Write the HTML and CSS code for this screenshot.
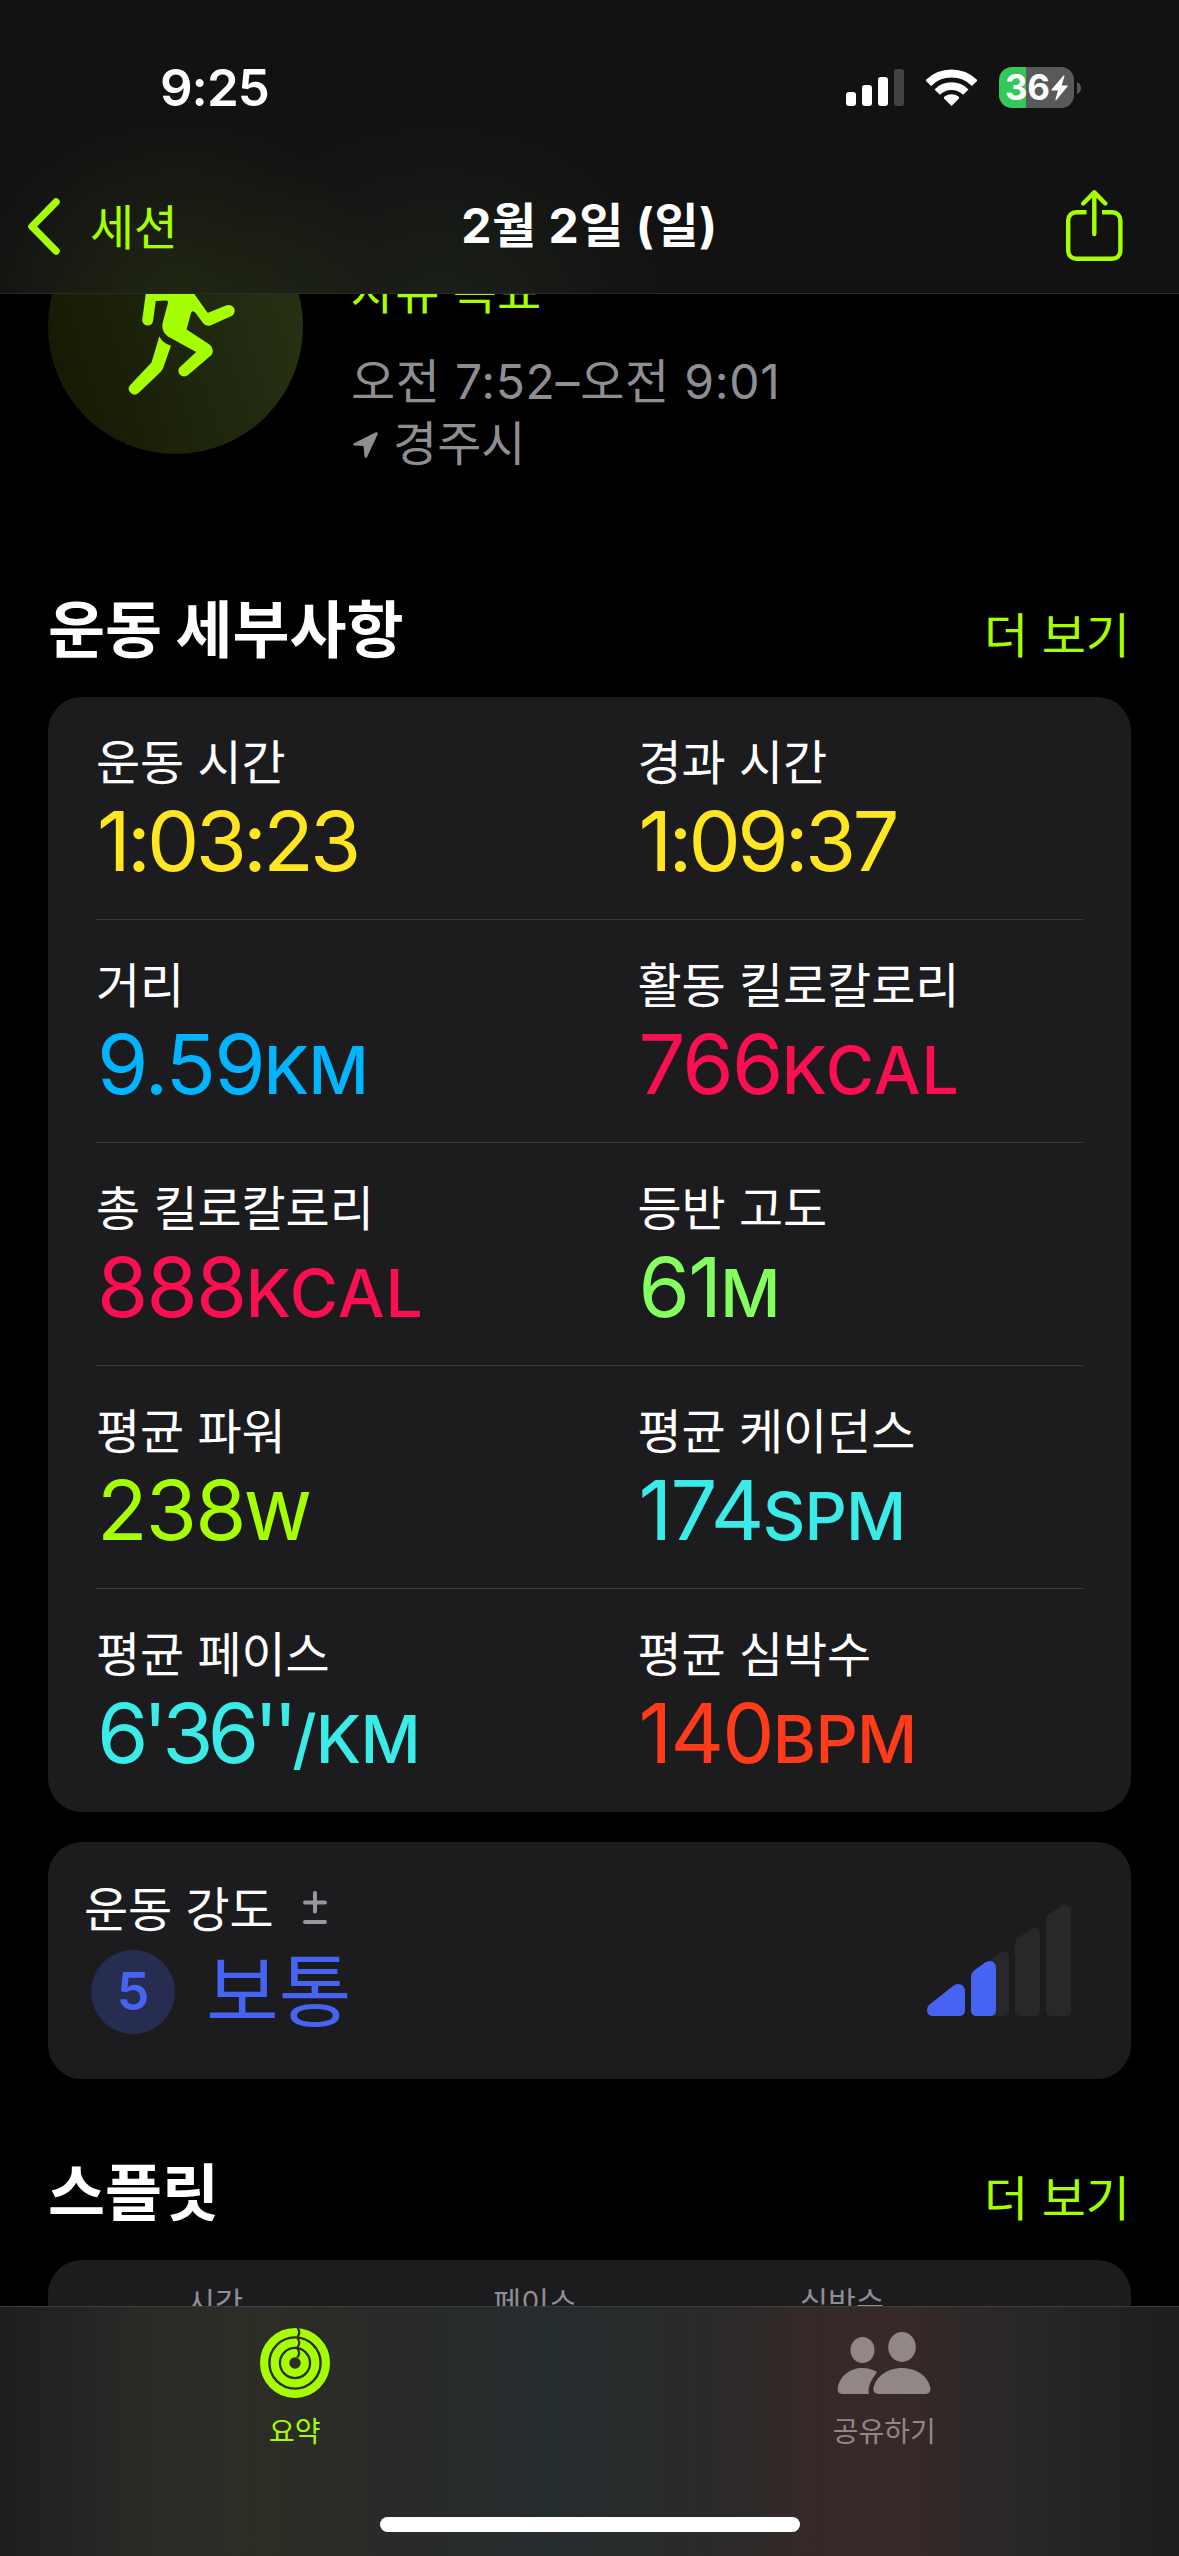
FILE: index.html
```html
<!DOCTYPE html>
<html lang="ko">
<head>
<meta charset="utf-8">
<title>2월 2일 (일)</title>
<link rel="stylesheet" href="styles.css">
</head>
<body>
<div class="screen">
  <header class="top">
    <div class="status">
      <span class="clock">9:25</span>
      <div class="status-icons">
        <svg class="signal" viewBox="0 0 58 37"><g fill="#fff"><rect x="0" y="23" width="10" height="14" rx="3"/><rect x="16" y="16" width="10" height="21" rx="3"/><rect x="32" y="8" width="10" height="29" rx="3"/></g><rect x="48" y="0" width="10" height="37" rx="3" fill="#434343"/></svg>
        <svg class="wifi" viewBox="0 0 51 37"><g fill="none" stroke="#fff"><path stroke-width="8" d="M2.3 14.2a32.8 32.8 0 0 1 46.4 0"/><path stroke-width="7.6" d="M11.2 23.1a20.2 20.2 0 0 1 28.6 0"/></g><path fill="#fff" d="M25.5 37l-7.4-7.6q-.6-1 .4-1.8a11.5 11.5 0 0 1 14 0q1 .8.4 1.8z"/></svg>
        <div class="battery">
          <span class="battery-level">36</span>
          <svg class="bolt" viewBox="0 0 17 26"><path fill="#fff" d="M12.5.6 .6 14.6q-.6 1 .5 1H7L4.400 24.600q0 1.200 1 .5L16.500 11.400q.6-1-.5-1H10.600L13.500 1.200Q13.500 0 12.500.6z"/></svg>
        </div>
        <svg class="nub" viewBox="0 0 4 12"><path fill="#59595a" d="M0 0q4 2 4 6t-4 6z"/></svg>
      </div>
    </div>
    <nav class="nav">
      <div class="back">
        <svg class="chevron" viewBox="0 0 33 57"><path d="M29 4 5 28.500 29 53" fill="none" stroke="#a6ff00" stroke-width="7.500" stroke-linecap="round" stroke-linejoin="round"/></svg>
        <span>세션</span>
      </div>
      <h1 class="nav-title">2월 2일 (일)</h1>
      <svg class="share" viewBox="0 0 57 72"><g fill="none" stroke="#a6ff00" stroke-width="4.400"><path d="M20.500 22.200H10.200a8 8 0 0 0-8 8V60.800a8 8 0 0 0 8 8H46.400a8 8 0 0 0 8-8V30.200a8 8 0 0 0-8-8H36"/><path d="M28.300 44V3M17.200 13.500 28.300 2.400l11 11.100" stroke-linecap="round" stroke-linejoin="round"/></g></svg>
    </nav>
  </header>

  <main class="content">
    <section class="summary">
      <svg class="activity" viewBox="48 199 255 255">
        <defs><linearGradient id="disc" x1="0" y1=".6" x2="1" y2=".3"><stop offset="0" stop-color="#161a04"/><stop offset="1" stop-color="#263214"/></linearGradient></defs>
        <circle cx="175.500" cy="326.500" r="127.500" fill="url(#disc)"/>
        <g fill="#a6ff00">
          <path d="M149 270 185 270 195 295 207 312Q208 313 210 312L226 305.600A5.800 5.800 0 0 1 231.500 316L211 325.200Q206 327 203 323L195.500 312.800Q192.500 309.500 191 313L186.600 329.500 209.500 344.500Q215 349 211.500 355L188 375A5.700 5.700 0 0 1 179.500 367.500L196.200 352 168 336.500Q161 331 162.600 323L168 303Q168.500 300.300 166 300.400L155.800 300.900 153.200 320A5.500 5.500 0 0 1 142.200 320L146 292z"/>
          <path d="M159.300 336.500Q163 343.500 171 345.800L163.500 367Q162.500 370 160 372.500L138.500 393A5.800 5.800 0 0 1 129.800 385.500L151.500 362.500z"/>
        </g>
      </svg>
      <div class="summary-text">
        <p class="goal">자유 목표</p>
        <p class="when">오전 7:52–오전 9:01</p>
        <p class="where"><svg class="arrow" viewBox="0 0 25 26"><path fill="#8e8e93" d="M22.800.3 1 11.200q-2 1.600.4 2.300L10.500 14 11.500 24.300q.8 2.700 2.600.6L24.800 2Q25-.4 22.800.3z"/></svg><span>경주시</span></p>
      </div>
    </section>

    <div class="section-head details-head"><h2>운동 세부사항</h2><a class="more">더 보기</a></div>

    <section class="card metrics">
      <div class="row">
        <div class="metric"><p class="label">운동 시간</p><p class="value yellow time">1:03:23</p></div>
        <div class="metric"><p class="label">경과 시간</p><p class="value yellow time">1:09:37</p></div>
      </div>
      <div class="row">
        <div class="metric"><p class="label">거리</p><p class="value blue">9.59<span class="unit">KM</span></p></div>
        <div class="metric"><p class="label">활동 킬로칼로리</p><p class="value pink">766<span class="unit kcal">KCAL</span></p></div>
      </div>
      <div class="row">
        <div class="metric"><p class="label">총 킬로칼로리</p><p class="value pink">888<span class="unit kcal">KCAL</span></p></div>
        <div class="metric"><p class="label">등반 고도</p><p class="value green">61<span class="unit">M</span></p></div>
      </div>
      <div class="row">
        <div class="metric"><p class="label">평균 파워</p><p class="value lime">238<span class="unit">W</span></p></div>
        <div class="metric"><p class="label">평균 케이던스</p><p class="value cyan">174<span class="unit">SPM</span></p></div>
      </div>
      <div class="row">
        <div class="metric"><p class="label">평균 페이스</p><p class="value cyan pace">6'36''<span class="unit">/KM</span></p></div>
        <div class="metric"><p class="label">평균 심박수</p><p class="value red">140<span class="unit">BPM</span></p></div>
      </div>
    </section>

    <section class="card effort">
      <div>
        <p class="label effort-label">운동 강도<svg class="plusminus" viewBox="0 0 24 33"><path d="M2 11.500H22M12 2V20.500M2 31H22" stroke="#98989e" stroke-width="4" stroke-linecap="round" fill="none"/></svg></p>
        <div class="effort-value"><span class="badge">5</span><span class="effort-text">보통</span></div>
      </div>
      <svg class="bars" viewBox="927 1904 144 112">
        <g fill="#28282a">
          <path d="M977 2016V1972L998 1953.500Q1001 1951.500 1003 1951.500 1009 1952 1009 1958V2010Q1009 2016 1003 2016z"/>
          <path d="M1015 1943Q1015 1940 1018 1938L1030 1929.500Q1034 1927 1037 1929 1040 1931 1040 1935V2010Q1040 2016 1034 2016H1021Q1015 2016 1015 2010z"/>
          <path d="M1046 1919.500Q1046 1916.500 1049 1914.500L1061 1906Q1065 1903.500 1068 1905.500 1071 1907.500 1071 1911.500V2010Q1071 2016 1065 2016H1052Q1046 2016 1046 2010z"/>
        </g>
        <g fill="#4763f1">
          <path d="M929 2005 953 1986Q957 1983 961 1984.500 965 1986.500 965 1991V2010Q965 2016 959 2016H932Q927 2015.500 927 2010 927 2007 929 2005z"/>
          <path d="M971 1976Q971 1973 973.500 1971L985 1962.500Q989 1960 992.500 1961.500 996 1963.500 996 1968V2010Q996 2016 990 2016H977Q971 2016 971 2010z"/>
        </g>
      </svg>
    </section>

    <div class="section-head splits-head"><h2>스플릿</h2><a class="more">더 보기</a></div>
    <section class="card splits"><span>시간</span><span>페이스</span><span>심박수</span></section>
  </main>

  <footer class="tabbar">
    <div class="tab active">
      <svg class="tab-icon" viewBox="0 0 94 70"><g fill="none" stroke="#a6ff00" stroke-width="8.200">
        <circle cx="47" cy="35" r="30.900"/><circle cx="47" cy="35" r="20.300"/><circle cx="47" cy="35" r="9.800"/></g>
        <g fill="none" stroke="#2d2c27" stroke-width="2.200"><path d="M49.500 0q3.500 4.200 0 9M49.500 10.400q3.500 4.200 0 9M49.500 20.800q3.500 4.400-.4 8.600"/></g></svg>
      <span>요약</span>
    </div>
    <div class="tab">
      <svg class="tab-icon" viewBox="0 0 94 70"><g fill="#918784"><ellipse cx="25.500" cy="22" rx="12" ry="13"/><ellipse cx="65" cy="19" rx="13.800" ry="15"/><path d="M40 44C33 54 31 58 31.800 66H5Q.7 65.500.6 61.500C2 48 13 40 25.500 40Q33.500 40 40 44z"/><path d="M41 66Q36.500 65.500 36.300 61C38 49 50 40 65 40S92 49 93.500 61Q93.300 65.500 89 66z"/></g></svg>
      <span>공유하기</span>
    </div>
    <div class="home"></div>
  </footer>
</div>
</body>
</html>
```
FILE: styles.css
```css
* { box-sizing: border-box; }
body { margin: 0; background: #000; }
p, h1, h2 { margin: 0; font-weight: 400; }
svg { display: block; flex: none; }

.screen {
  display: flex;
  flex-direction: column;
  width: 1179px;
  height: 2556px;
  overflow: hidden;
  background: #000;
  color: #fff;
  font-family: "Noto Sans CJK KR", sans-serif;
  font-size: 48px;
  white-space: nowrap;
}

/* status and navigation */
.top {
  height: 294px;
  flex: none;
  border-bottom: 1px solid #2a2a2b;
  background:
    radial-gradient(ellipse 210px 190px at 180px 310px, rgba(80, 110, 20, .24), rgba(80, 110, 20, 0)),
    radial-gradient(ellipse 230px 190px at 440px 310px, rgba(80, 110, 60, .15), rgba(80, 110, 60, 0)),
    #121212;
}
.status {
  display: flex;
  justify-content: space-between;
  align-items: center;
  height: 175px;
  padding: 0 98px 0 160px;
}
.clock { font: 600 51px/60px Inter, sans-serif; letter-spacing: -1px; }
.status-icons { display: flex; align-items: center; }
.signal { width: 58px; height: 37px; }
.wifi { width: 51px; height: 37px; margin-left: 22px; }
.battery {
  display: flex;
  align-items: center;
  width: 75px;
  height: 41px;
  margin-left: 22px;
  padding-left: 6px;
  border-radius: 13px;
  background: linear-gradient(90deg, #34c759 27px, #59595a 27px);
}
.battery-level { font: 700 35px/41px Inter, sans-serif; letter-spacing: -.3px; }
.bolt { width: 17px; height: 26px; margin-left: 1px; }
.nub { width: 4px; height: 12px; margin-left: 3px; }
.nav {
  display: grid;
  grid-template-columns: 1fr auto 1fr;
  align-items: center;
  height: 102px;
  padding: 0 28px;
}
.back { display: flex; align-items: center; gap: 30px; margin-left: -1px; color: #a6ff00; letter-spacing: -.3px; line-height: 60px; }
.back span { margin-top: -5px; }
.chevron { width: 33px; height: 57px; }
.nav-title { font: 700 48px/60px Inter, "Noto Sans CJK KR", sans-serif; letter-spacing: .5px; }
.share { width: 57px; height: 72px; justify-self: end; margin-right: 28px; }

/* workout summary */
.content { height: 2012px; flex: none; overflow: hidden; padding: 0 48px; }
.summary { display: flex; gap: 48px; height: 255px; margin-top: -95px; }
.activity { width: 255px; height: 255px; }
.summary-text { padding-top: 58px; line-height: 62px; color: #8e8e93; }
.goal { color: #a6ff00; margin-bottom: 32px; }
.when { font-family: Inter, "Noto Sans CJK KR", sans-serif; letter-spacing: .7px; }
.where { display: flex; align-items: center; gap: 15px; margin-top: -4px; }
.arrow { width: 25px; height: 26px; margin: 9px 0 0 2px; }

.section-head { display: flex; justify-content: space-between; align-items: baseline; height: 76px; line-height: 76px; }
.section-head h2 { font-weight: 700; font-size: 62px; word-spacing: -4px; }
.details-head { margin-top: 134px; }
.more { color: #a6ff00; padding-right: 1px; }

/* metric grid */
.card { border-radius: 34px; background: #1c1c1e; }
.metrics { margin-top: 33px; padding: 0 48px; }
.row { display: grid; grid-template-columns: 1fr 1fr; column-gap: 96px; height: 223px; padding-top: 34px; border-bottom: 1px solid #3a3a3c; }
.row:last-child { border-bottom: 0; }
.label { line-height: 56px; letter-spacing: -.1px; }
.value { margin-top: 14px; padding-left: 1px; font: 400 83px/80px Inter, sans-serif; letter-spacing: -1.8px; }
.time { letter-spacing: -3.8px; }
.pace { letter-spacing: -5.6px; }
.unit { font-size: 66px; font-weight: 500; letter-spacing: -.8px; }
.kcal { letter-spacing: 1px; }
.yellow { color: #ffe620; }
.blue { color: #00b4ff; }
.pink { color: #fc0f50; }
.green { color: #83ff60; }
.lime { color: #a6ff00; }
.cyan { color: #3aebe8; }
.red { color: #ff3b1a; }

/* effort */
.effort { display: flex; justify-content: space-between; height: 237px; margin-top: 30px; padding: 36px 60px 0 36px; }
.effort-label { display: flex; align-items: center; gap: 29px; }
.plusminus { width: 24px; height: 33px; margin-top: 3px; }
.effort-value { display: flex; align-items: center; gap: 31px; height: 84px; margin: 16px 0 0 7px; color: #4763f1; }
.badge { width: 84px; height: 84px; border-radius: 50%; background: #262d50; text-align: center; font: 600 52px/84px Inter, sans-serif; }
.effort-text { font-size: 79px; line-height: 84px; margin-top: -10px; }
.bars { width: 144px; height: 112px; margin-top: 26px; }

/* splits */
.splits-head { margin-top: 72px; }
.splits { display: grid; grid-template-columns: 306px 307px 1fr; height: 236px; margin-top: 33px; padding: 19px 0 0 139px; color: #8e8e96; font-size: 30.5px; line-height: 44px; }

/* tab bar */
.tabbar {
  display: grid;
  grid-template-columns: 1fr 1fr;
  align-content: space-between;
  height: 250px;
  flex: none;
  padding: 21px 0 24px;
  border-top: 1px solid #3d3d40;
  background: linear-gradient(90deg, #1e1e1e 0, #2a2a27 150px, #2e2d25 250px, #292a29 400px, #262d2f 550px, #292a2a 690px, #352928 820px, #382929 890px, #2a2727 1010px, #222 1110px, #1e1e1e 1179px);
}
.tab { display: flex; flex-direction: column; align-items: center; gap: 11px; color: #918784; font-size: 28px; line-height: 42px; }
.tab.active { color: #a6ff00; }
.tab-icon { width: 94px; height: 70px; }
.home { grid-column: 1 / 3; justify-self: center; width: 420px; height: 15px; border-radius: 8px; background: #fff; }
```
